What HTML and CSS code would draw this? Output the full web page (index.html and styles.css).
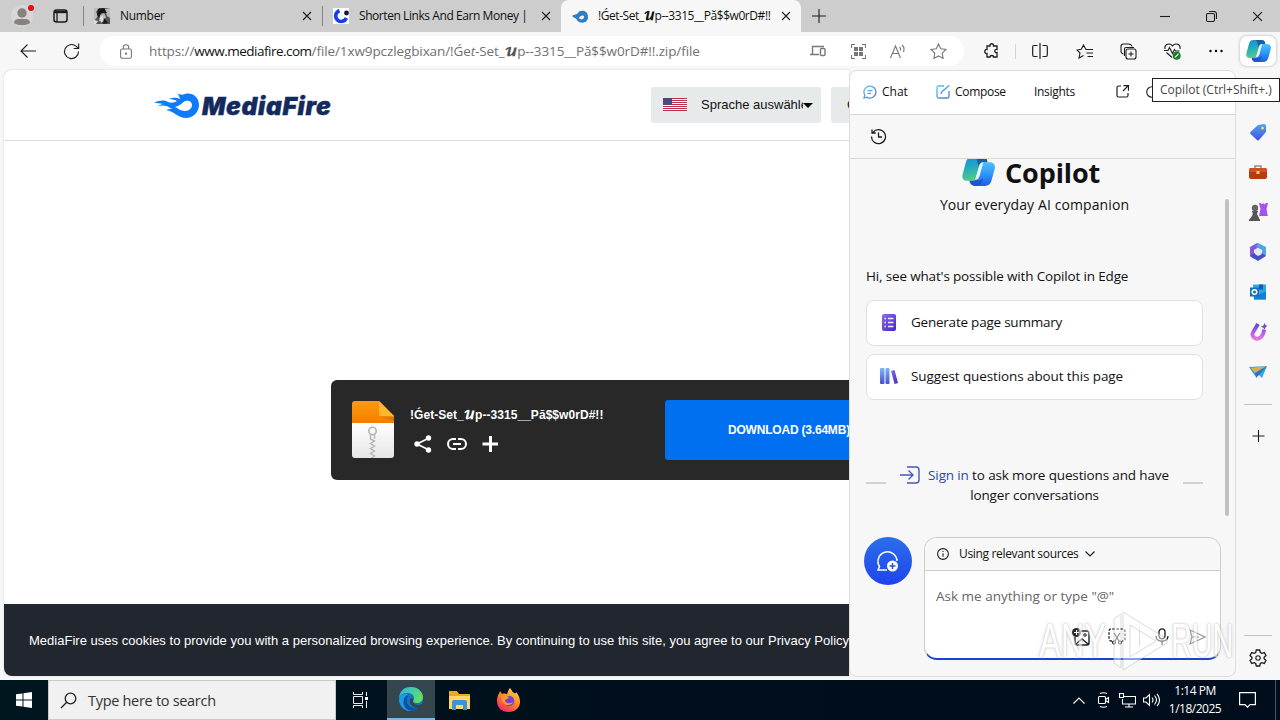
FILE: index.html
```html
<!DOCTYPE html>
<html lang="en">
<head>
<meta charset="utf-8">
<title>MediaFire - Edge</title>
<link rel="stylesheet" href="styles.css">
</head>
<body>
<svg width="0" height="0" class="defs">
  <defs>
    <linearGradient id="cpA" x1="0" y1="0" x2="0.2" y2="1"><stop offset="0" stop-color="#1c88d8"/><stop offset=".45" stop-color="#1fa9c0"/><stop offset="1" stop-color="#52c98a"/></linearGradient>
    <linearGradient id="cpB" x1="0" y1="0" x2="0" y2="1"><stop offset="0" stop-color="#4cc0ff"/><stop offset=".5" stop-color="#2e96fa"/><stop offset="1" stop-color="#1b5fe0"/></linearGradient>
    <linearGradient id="violet" x1="0" y1="0" x2="1" y2="1"><stop offset="0" stop-color="#8a6cf5"/><stop offset="1" stop-color="#4425c4"/></linearGradient>
    <linearGradient id="books" x1="0" y1="0" x2="0" y2="1"><stop offset="0" stop-color="#7ab8f8"/><stop offset="1" stop-color="#4a50d0"/></linearGradient>
    <linearGradient id="sky" x1="0" y1="0" x2="1" y2="1"><stop offset="0" stop-color="#55c6f0"/><stop offset="1" stop-color="#4778e0"/></linearGradient>
    <linearGradient id="tag" x1="0" y1="0" x2="0" y2="1"><stop offset="0" stop-color="#4aa6f0"/><stop offset="1" stop-color="#4a50e0"/></linearGradient>
    <linearGradient id="edgeG" x1="0" y1="0" x2="1" y2=".6"><stop offset="0" stop-color="#2fb4ea"/><stop offset="1" stop-color="#63dd62"/></linearGradient>
    <linearGradient id="pink" x1="0" y1="0" x2="0" y2="1"><stop offset="0" stop-color="#6246d6"/><stop offset="1" stop-color="#e873e6"/></linearGradient>
    <linearGradient id="fox" x1=".8" y1="0" x2=".2" y2="1"><stop offset="0" stop-color="#ffe043"/><stop offset=".45" stop-color="#ff8a24"/><stop offset="1" stop-color="#f5206e"/></linearGradient>
    <linearGradient id="paper" x1="0" y1="0" x2="0" y2="1"><stop offset="0" stop-color="#fff"/><stop offset="1" stop-color="#e6e6e6"/></linearGradient>
    <linearGradient id="orange" x1="0" y1="0" x2="0" y2="1"><stop offset="0" stop-color="#ff9a0c"/><stop offset="1" stop-color="#f08000"/></linearGradient>
    <symbol id="x" viewBox="0 0 10 10"><path d="M1 1l8 8M9 1L1 9"/></symbol>
    <symbol id="copilot" viewBox="0 0 32 30">
      <path fill="url(#cpB)" d="M18 6h8.500c4 0 6 2.500 5.300 6l-3 11c-1 4-3 6-7 6H11z"/>
      <path fill="#2054d0" d="M7 23.500h9c2 0 3.500-.5 4.500-3-1 6-3 8.500-7.500 8.500-4 0-5-2-6-5.500z"/>
      <path fill="url(#cpA)" d="M10 1h11l-5.500 17.500c-1 3.500-2 5.500-5 5.500h-6C1 24-.2 21.500.6 18L3.500 7C4.600 2.800 6 1 10 1z"/>
      <path fill="#175f9e" d="M12 1h8.500c3 0 3.700 1.500 4.300 5H21c-3 0-4 1.600-5 4l-.8-3C14.600 4 14 2 12 1z"/>
      <path fill="#e9f8ff" d="M16.500 10c.7-2.600 1.700-4 4.300-4l-3.700 13c-.8 2.500-1.800 4-4.400 4z"/>
    </symbol>
    <symbol id="flame" viewBox="0 0 46 26">
      <path fill-rule="evenodd" d="M0 11c6-3 10-3 14-1 3 1 6 1 9-1-2-1-4-2-8-2 4-2 8-1 11 0-1-3-1-4-3-6 3 2 5 2 8 1 7-2 14 3 14 11 0 7-6 13-13 13-8 0-12-7-20-8 2-1 4-1 6-1-5-4-9-4-14-3 2-1 3-2 5-2-3-1-6-1-9-1zM21 15c3 1 5 4 10 4 4 0 7-3 7-6 0-4-4-5-7-4-3 2-6 5-10 6z"/>
    </symbol>
  </defs>
</svg>

<div class="tabs">
  <div class="avatar"><svg width="22" height="22" viewBox="0 0 22 22"><circle cx="11" cy="11" r="11" fill="#d9d7d5"/><circle cx="11" cy="8" r="4.700" fill="#86827f"/><path fill="#86827f" d="M3 18c0-3 2-4 4-4h8c2 0 4 1 4 4-4 3-12 3-16 0z"/></svg><i class="red-dot"></i></div>
  <svg class="workspace line" width="15" height="14" viewBox="0 0 15 14"><rect x="1" y="1" width="13" height="12" rx="2.500" stroke-width="1.500"/><path d="M1 3h13" stroke-width="2.400"/><path d="M4 3v10" stroke-width="1.300"/></svg>
  <div class="tab first">
    <svg width="16" height="16"><path fill="#555" d="M0 0h16v16H0z"/><path fill="#bbb" d="M0 0h5l-3 4 2 4-4 5zM11 1l5-1v10l-3-2zM6 7l4-2 2 4-3 5-4-1z"/><path fill="#181818" d="M4 1l6-1 3 5-6 0-2 5-2-3zM10 10l4 5-5 1z"/><path fill="#ddd" d="M6 9l3-1 0 4-2 3zM0 12l4 1-2 3H0z"/></svg>
    <span class="title t-number">Number</span><svg class="line close" width="10" height="10"><use href="#x"/></svg>
  </div>
  <div class="tab second">
    <svg width="16" height="16"><path fill="#fff" d="M0 0h16v16H0z"/><path fill="none" stroke="#173cf3" stroke-width="3.600" d="M6.500 2.700A5.500 5.500 0 1 0 13.300 10"/><circle cx="13.500" cy="5" r="2.400" fill="#15153d"/></svg>
    <span class="title t-short">Shorten Links And Earn Money |</span><svg class="line close" width="10" height="10"><use href="#x"/></svg>
  </div>
  <div class="tab active">
    <svg width="16" height="13" viewBox="0 0 16 13"><path fill="#2f7dc3" fill-rule="evenodd" d="M0 6c2-2 5-1 6-3C7 0 16-1 16 7c0 7-9 7-11 3C4 8 2 8 0 6zM7 8c1 2 5 2 5-1 0-2-3-2-5 1z"/></svg>
    <span class="title t-active">!Ǵet-Set_<b class="scr">𝓤</b>p--3315__Pă$$w0rD#!!</span><svg class="line close" width="10" height="10"><use href="#x"/></svg>
  </div>
  <svg class="line plus-tab" width="14" height="14" viewBox="0 0 14 14"><path d="M7 0v14M0 7h14"/></svg>
  <div class="win">
    <span><svg class="line" width="10" height="10"><path d="M0 5.500h10"/></svg></span>
    <span><svg class="line" width="11" height="11" viewBox="0 0 11 11"><rect x=".5" y="2.500" width="8" height="8" rx="1.500"/><path d="M3 .5h5q2.500 0 2.500 2.500v5"/></svg></span>
    <span><svg class="line" width="11" height="11" viewBox="0 0 10 10"><use href="#x"/></svg></span>
  </div>
</div>

<div class="toolbar">
  <svg class="line back" width="16" height="14" viewBox="0 0 16 14"><path d="M16 7H1M7.500 .5L1 7l6.500 6.500"/></svg>
  <svg class="line reload" width="17" height="17" viewBox="0 0 17 17"><path d="M15.500 8.500A7 7 0 1 1 13 3.200l2.500 2.300M15.700 .5v5h-5"/></svg>
  <div class="address">
    <svg class="line grey lock" width="12" height="15" viewBox="0 0 12 15"><rect x=".6" y="5" width="10.800" height="9.300" rx="1.500"/><path d="M3.300 5V3.500a2.700 2.700 0 0 1 5.400 0V5"/><circle cx="6" cy="9.700" r=".6"/></svg>
    <span class="url">https://<b class="host">www.mediafire.com</b>/file/1xw9pczlegbixan/!Ǵe<i>t</i>-Set_<b class="scr">𝓤</b>p--3315__Pă$$w0rD#!!.zip/file</span>
    <div class="addr-icons">
      <svg class="line grey" width="16" height="12" viewBox="0 0 16 12"><path stroke-width="1.400" d="M2.500 9V1.500H14M0 9.500h9"/><rect x="10.500" y="3.500" width="4.500" height="7" rx="1" stroke-width="1.400"/></svg>
      <svg class="line grey" width="15" height="15" viewBox="0 0 15 15"><path d="M.5 4V.5H4M11 .5h3.500V4M.5 11v3.500H4M14.500 11v3.500H11"/><path fill="#777" stroke="none" d="M3 3h4v4H3zM8 3h4v4H8zM3 8h4v4H3zM8 8h4v4H8z"/></svg>
      <svg class="line grey" width="16" height="15" viewBox="0 0 16 15"><path d="M.5 14L5.500 2l5 12M2.500 9.500h6M9.500 3q1.500 1.300 1 3.500M12 1q3 2.500 1.500 7"/></svg>
      <svg class="line grey" width="17" height="16" viewBox="0 0 17 16"><path d="M8.500 1l2.300 4.800 5.200.7-3.800 3.700.9 5.200-4.600-2.500-4.600 2.500.9-5.200L1 6.500l5.200-.7z"/></svg>
    </div>
  </div>
  <div class="tools">
    <svg class="line" width="15" height="16" viewBox="0 0 15 16"><path stroke-width="1.300" d="M3 3h3c-.5-3 4-3 3.500 0H13v3.500c-3-.5-3 3.500 0 3V14H9.500c.5-2-3.500-2-3.500 0H3v-3.500C0 11 0 6 3 6.500z"/></svg>
    <i class="sep"></i>
    <svg class="line" width="16" height="16" viewBox="0 0 16 16"><path stroke-width="1.200" d="M5.500 2.500H2q-1.300 0-1.300 1.300v8.500q0 1.200 1.300 1.200h3.500M10.500 2.500H14q1.300 0 1.300 1.300v8.500q0 1.200-1.300 1.200h-3.500M8 0v16"/></svg>
    <svg class="line" width="17" height="15" viewBox="0 0 17 15"><path d="M10 5.500L7.500 1 5.300 5.200 1 6l3 3-1 5 4.500-2.500M9.500 5.500H17M10.500 9H17M11.500 12.500H17"/></svg>
    <svg class="line" width="17" height="17" viewBox="0 0 17 17"><path d="M3.500 11Q1 10.500 1 8V3.500Q1 1 3.500 1h5q3 0 3.500 2.500M4.500 13V6q0-1.500 1.500-1.500h8"/><rect x="6" y="6" width="10" height="10" rx="2" fill="#f7f7f7"/><path d="M11 8.500v5M8.500 11h5"/></svg>
    <svg class="line" width="17" height="17" viewBox="0 0 17 17"><path d="M1 6C0 1 6-.5 8.500 3 11-.5 17 1 16 6M2.500 9.500L8 14.500M0 7.500h4l1.500-3 3 6 2-4 1 1.500h4"/><circle cx="12.700" cy="12.700" r="4" fill="#13812a" stroke="none"/><path stroke="#fff" d="M11 14.300l3.500-3.500"/></svg>
    <svg width="14" height="4" viewBox="0 0 14 4"><circle cx="1.500" cy="2" r="1.200"/><circle cx="7" cy="2" r="1.200"/><circle cx="12.500" cy="2" r="1.200"/></svg>
    <div class="cp-btn"><svg width="25" height="24"><use href="#copilot"/></svg></div>
  </div>
</div>

<div class="main">
  <div class="page">
    <div class="mf-head">
      <svg class="mf-flame" width="46" height="26"><use href="#flame"/></svg><span class="mf-word">MediaFire</span>
      <div class="lang">
        <svg width="24" height="14"><path fill="#fff" d="M0 0h24v13H0z"/><path fill="#b8304a" d="M0 0h24v1H0zM0 2h24v1H0zM0 4h24v1H0zM0 6h24v1H0zM0 8h24v1H0zM0 10h24v1H0zM0 12h24v1H0z"/><path fill="#4c4a78" d="M0 0h9v7H0z"/></svg>
        <span class="lang-text">Sprache auswähle</span><i class="caret"></i>
      </div>
      <div class="next-btn"><span>C</span></div>
    </div>
    <div class="body">
      <div class="dl">
        <svg class="zip" width="42" height="57" viewBox="0 0 42 57"><path fill="url(#paper)" d="M0 21h42v33q0 3-3 3H3q-3 0-3-3z"/><path fill="url(#orange)" d="M3 0h24l15 15v7H0V3q0-3 3-3z"/><path fill="#ffb52e" d="M27 0l15 15H29q-2 0-2-2z"/><path fill="#d07000" d="M29 16h13v4z" opacity=".6"/><circle cx="20.500" cy="30" r="3.700" fill="none" stroke="#b5b5b5" stroke-width="1.600"/><path fill="none" stroke="#b5b5b5" stroke-width="1.400" d="M18.500 33v5l4 2-4 2.500 4 2.500-4 2.500 4 2.500-4 2.500 4 2.500-3 2M22.500 33v5"/></svg>
        <div class="info">
          <div class="fname">!Ǵet-Set_<span class="scr">𝓤</span>p--3315__Pă$$w0rD#!!</div>
          <div class="acts">
            <svg width="18" height="18" viewBox="0 0 18 18" fill="#fff"><path fill="none" stroke="#fff" stroke-width="1.800" d="M15 3L3 9l12 6"/><circle cx="14.500" cy="3" r="2.700"/><circle cx="3" cy="9" r="2.700"/><circle cx="14.500" cy="15" r="2.700"/></svg>
            <svg width="20" height="12" viewBox="0 0 20 12" fill="none" stroke="#fff" stroke-width="2"><path d="M9 1H6a5 5 0 0 0 0 10h3M11 1h3a5 5 0 0 1 0 10h-3M6 6h8"/></svg>
            <svg width="16" height="16" viewBox="0 0 16 16"><path stroke="#fff" stroke-width="3" d="M8.500 0v16M.5 8h16"/></svg>
          </div>
        </div>
        <div class="dl-btn"><span>DOWNLOAD (3.64MB)</span></div>
      </div>
    </div>
    <div class="cookie"><span>MediaFire uses cookies to provide you with a personalized browsing experience. By continuing to use this site, you agree to our Privacy Policy</span></div>
  </div>

  <div class="panel">
    <div class="p-head">
      <svg width="14" height="14" viewBox="0 0 14 14" fill="none" stroke="url(#sky)" stroke-width="1.300"><path d="M1 13l.7-3A6 6 0 1 1 4 12.300zM4.500 5.700h5M4.500 8.300h3.500"/></svg>
      <span class="h-chat">Chat</span>
      <svg class="i-comp" width="14" height="14" viewBox="0 0 14 14" fill="none" stroke="url(#sky)" stroke-width="1.300"><path d="M8 1H2.500Q1 1 1 2.500v9Q1 13 2.500 13h9q1.500 0 1.500-1.500V6M5 9.200l.5-2L13.300 .3"/></svg>
      <span class="h-comp">Compose</span>
      <span class="h-ins">Insights</span>
      <svg class="line i-open" width="13" height="13" viewBox="0 0 13 13"><path stroke-width="1.200" d="M5 1H2.500Q1 1 1 2.500v8Q1 12 2.500 12h8q1.500 0 1.500-1.500V8M7.500 .7h5v5M12.300 .7L7 6"/></svg>
      <svg class="line i-ref" width="12" height="12" viewBox="0 0 12 12"><circle cx="6" cy="6" r="5.300"/></svg>
    </div>
    <div class="p-sub"><svg class="line" width="17" height="17" viewBox="0 0 17 17"><path stroke-width="1.300" d="M3 4.300A7 7 0 1 1 1.500 8.500M2 1.500V5h3.700M8.500 4.500v4.500H12"/></svg></div>
    <div class="p-body">
      <div class="brand"><svg width="33" height="31"><use href="#copilot"/></svg><b>Copilot</b></div>
      <div class="tagline"><span>Your everyday AI companion</span></div>
      <div class="hi"><span>Hi, see what's possible with Copilot in Edge</span></div>
      <div class="card"><svg width="18" height="18" viewBox="0 0 18 18"><rect x="2" y="0" width="14" height="17" rx="2" fill="url(#violet)"/><path stroke="#f3e9ff" stroke-width="1.300" d="M4.500 4.500H6M8 4.500h5.500M4.500 8.500H6M8 8.500h5.500M4.500 12.500H6M8 12.500h5.500"/></svg><span class="c1">Generate page summary</span></div>
      <div class="card"><svg width="18" height="17" viewBox="0 0 18 17"><rect width="4.500" height="16" rx="1" fill="url(#books)"/><rect x="5.500" width="4" height="16" rx="1" fill="url(#books)"/><path fill="url(#violet)" d="M11 3l3.500-1L18 15l-3.500 1z"/></svg><span class="c2">Suggest questions about this page</span></div>
      <div class="sign">
        <i class="dash"></i>
        <p><svg width="20" height="18" viewBox="0 0 20 18" fill="none" stroke="#4658bd" stroke-width="1.400"><path d="M7 1h9q3 0 3 3v10q0 3-3 3H7M0 9h13M8.500 4.500L13 9l-4.500 4.500"/></svg><a>Sign in</a> to ask more questions and have<br><span class="longer">longer conversations</span></p>
        <i class="dash"></i>
      </div>
      <div class="chat">
        <div class="new"><svg width="24" height="24" viewBox="0 0 24 24" fill="none" stroke="#fff" stroke-width="1.500"><path d="M11 21H2l1.500-3.500A9.500 9.500 0 1 1 21 12"/><circle cx="16.500" cy="17" r="5.500" fill="#fff" stroke="none"/><path stroke="#3554c8" d="M16.500 14v6M13.500 17h6"/></svg></div>
        <div class="box">
          <div class="src"><svg class="line" width="12" height="12" viewBox="0 0 12 12"><circle cx="6" cy="6" r="5.400"/><path d="M6 5.200v3.500M6 3v1"/></svg><span>Using relevant sources</span><svg class="line" width="10" height="6" viewBox="0 0 10 6"><path d="M.5 .5L5 5 9.500 .5"/></svg></div>
          <div class="ask"><span>Ask me anything or type "@"</span></div>
          <div class="box-icons">
            <svg class="line" width="18" height="18" viewBox="0 0 18 18"><path stroke-width="1.400" d="M9 3h6q2 0 2 2v10q0 2-2 2H5q-2 0-2-2V9M4 16l6-5 6 5"/><circle cx="13" cy="7" r="1.200"/><circle cx="4.500" cy="4.500" r="4.500" fill="#222" stroke="none"/><path stroke="#fff" d="M4.500 2v5M2 4.500h5"/></svg>
            <svg class="line" width="18" height="17" viewBox="0 0 18 17"><path stroke-width="1.300" stroke-dasharray="2.500 1.500" d="M4 13H3q-2 0-2-2V3q0-2 2-2h12q2 0 2 2v8q0 2-2 2h-1"/><path d="M6 5l5 8M12 5l-5 8"/><circle cx="6" cy="14.500" r="1.500"/><circle cx="12" cy="14.500" r="1.500"/></svg>
            <i class="bar"></i>
            <svg class="line" width="14" height="17" viewBox="0 0 14 17"><rect x="4" y=".8" width="6" height="10" rx="3" stroke-width="1.300"/><path stroke-width="1.300" d="M1 8c0 7 12 7 12 0M7 13.200V17"/></svg>
            <svg class="line send" width="17" height="16" viewBox="0 0 17 16"><path d="M1 1l15 7-15 7 2-7zM3 8h7"/></svg>
          </div>
        </div>
      </div>
      <i class="thumb"></i>
    </div>
  </div>

  <div class="side">
    <svg width="18" height="18" viewBox="0 0 18 18"><path fill="url(#tag)" d="M9 2l6-1q2 0 2 2v6l-7 8q-1 1-2 0L1.500 11q-1-1 0-2z"/><circle cx="13.500" cy="5" r="1.500" fill="#ffda5a"/></svg>
    <svg width="18" height="16" viewBox="0 0 18 16"><path fill="none" stroke="#8a8f94" stroke-width="1.500" d="M6 4V2h6v2"/><rect y="4" width="18" height="11" rx="2" fill="#b83a11"/><path fill="#d0501f" d="M2 4h14q2 0 2 3v1H0V7q0-3 2-3z"/><rect x="7.500" y="7" width="3" height="3" fill="#ffd06a"/></svg>
    <svg width="19" height="18" viewBox="0 0 19 18"><path fill="#a850ea" d="M10 0h2l.8 1.500L14 0l1.500 1.500L17 0h2l-1.500 6 1 6 .5 1H10l1.500-7z"/><circle cx="6" cy="5" r="3.200" fill="#666"/><path fill="#555" d="M3 8h6l-1 3 2 4 1 2v1H0v-1l3-4 .8-2z"/></svg>
    <svg width="18" height="18" viewBox="0 0 18 18"><path fill="#8557df" d="M8 0L1 4v9l4 3V7l7-4z"/><path fill="#4fa4e8" d="M9 0l8 4v9l-4-2V7L7 4z"/><path fill="#4451c4" d="M1 13l8 5 8-5-4-3-4 2-4-2z"/><path fill="#e6e4fb" d="M9 6l3.500 1.500v4L9 13l-3-2V7z"/></svg>
    <svg width="18" height="17" viewBox="0 0 18 17"><path fill="#28a8ea" d="M4 1h13v15H5z"/><path fill="#0f5fa8" d="M10 1h4v5h-4z"/><path fill="#1480cf" d="M5 13l12-5v8H5z"/><path fill="#1170bf" d="M1 4h9v9H1z"/><circle cx="5.500" cy="8.500" r="2.300" fill="none" stroke="#fff" stroke-width="1.500"/></svg>
    <svg width="19" height="19" viewBox="0 0 19 19"><path fill="none" stroke="url(#pink)" stroke-width="4" d="M9 1L4 9.500c-3 5 3 9 7.500 6C14 13.500 15 10 15.500 7"/><path fill="#7646cf" d="M16 0l1 2.500 2 .5-2 1.500-1 2.500-1.500-2L12 4l2.500-1z"/></svg>
    <svg width="18" height="14" viewBox="0 0 18 14"><path fill="#33a6e8" d="M0 2l18-1-5 12-4-4-3 2z"/><path fill="#dcae44" d="M2 3l16-2L6 8z"/><path fill="#2375ca" d="M18 1L6 8l1 5 3-3z"/></svg>
    <i class="rule"></i>
    <svg class="line" width="13" height="13" viewBox="0 0 13 13"><path d="M6.500 .5v12M.5 6.500h12"/></svg>
    <div class="settings"><i class="rule"></i>
    <svg class="line" width="18" height="18" viewBox="0 0 18 18"><path stroke-width="1.300" d="M7.300 1h3.400l.6 2.500 1.500.9 2.500-.8L17 6.500l-1.900 1.700v1.600l1.900 1.700-1.700 2.900-2.500-.8-1.500.9-.6 2.500H7.300l-.6-2.500-1.500-.9-2.500.8L1 11.500l1.900-1.700V8.200L1 6.500l1.700-2.900 2.500.8 1.500-.9z"/><circle cx="9" cy="9" r="2.200"/></svg></div>
  </div>
</div>

<div class="taskbar">
  <div class="start"><svg width="16" height="16" viewBox="0 0 16 16"><path fill="#fff" d="M0 2.300L6.500 1.400v6.100H0zM7.500 1.200L16 0v7.500H7.500zM0 8.500h6.500v6.100L0 13.700zM7.500 8.500H16V16l-8.500-1.200z"/></svg></div>
  <div class="search"><svg width="17" height="17" viewBox="0 0 17 17" fill="none" stroke="#222" stroke-width="1.300"><circle cx="10.500" cy="6.500" r="5.300"/><path d="M6.700 10.300L1 16"/></svg><span>Type here to search</span></div>
  <div class="app"><svg width="16" height="16" viewBox="0 0 16 16" fill="none" stroke="#eee"><path d="M.5 0v2.500h9V0M.5 16v-2.500h9V16M.5 4.500h9v7h-9zM13.500 0v4M13.500 9v7"/><path fill="#fff" stroke="none" d="M12 5h3v3h-3z"/></svg></div>
  <div class="app on"><svg width="24" height="24" viewBox="0 0 24 24"><circle cx="12" cy="12" r="12" fill="#0f76c6"/><path fill="url(#edgeG)" d="M0 11C1 3 6 0 12 0c7 0 12 5 12 10 0 4-3 6-6 6-3 0-4-1-4-2 1-1 1-2 1-3 0-3-3-5-7-5-4 0-7 2-8 5z"/><path fill="#1a9ce2" d="M0 12c1-4 5-6 9-5-3 2-4 5-3 9 1 4 4 7 7 8C6 25 0 19 0 12z"/><path fill="#124fa2" d="M9 9c-4 8 3 14 11 12-6 6-18 2-15-9 1-3 3-4 4-3z"/><path fill="#34474f" d="M14 14c0 2 2 4 5 4 2 0 3-1 4-1 1 0 0 2-2 4-6 1-11-3-10-8 1-2 4-2 3 1z"/></svg></div>
  <div class="app"><svg width="21" height="19" viewBox="0 0 21 19"><path fill="#e8a92b" d="M0 0h8l2 3h11v15H0z"/><path fill="#fdd767" d="M0 5h21v13H0z"/><path fill="#3e93d8" d="M3 11q0-2 2-2h11q2 0 2 2v8h-4v-5H7v5H3z"/></svg></div>
  <div class="app"><svg width="23" height="24" viewBox="0 0 23 24"><path fill="url(#fox)" d="M13 0c2 2 2 4 4 5 1 0 2 1 2-1 3 3 4 7 4 10 0 6-5 10-11.500 10S0 20 0 13C0 8 2 6 3 3l2 3c2-1 4 0 5 0 1-2 1-4 3-6z"/><circle cx="12" cy="13" r="5.300" fill="#7443d6"/><path fill="#ff9a22" d="M4 8c4-2 6 0 8 1-1 2-3 2-4 3 0 4 5 4 8 2-1 4-11 6-12-6z"/></svg></div>
  <div class="tray">
    <svg class="tl" width="12" height="7" viewBox="0 0 12 7"><path d="M.5 6.500L6 1l5.500 5.500"/></svg>
    <svg class="tl" width="13" height="16" viewBox="0 0 13 16"><rect x="1.500" y="4.500" width="7" height="7" rx="1"/><path d="M8.500 7.500l3-2v5l-3-2M3 1.500q3.500-1.500 7 0M3 14.500q3.500 1.500 7 0"/></svg>
    <svg class="tl" width="17" height="15" viewBox="0 0 17 15"><path d="M5 3.500h11.500v7.500H3.500V6M10 11v3M6 14h8"/><rect x=".5" y=".5" width="4" height="4"/></svg>
    <svg class="tl" width="17" height="14" viewBox="0 0 17 14"><path d="M.5 5v4h2.500l3.500 3.500v-11L3 5zM9 4.500q2 2.500 0 5M11.500 2.500q4 4.500 0 9M14 .8q5 6.200 0 12.400"/></svg>
    <div class="clock"><span>1:14 PM</span><span>1/18/2025</span></div>
    <svg class="tl" width="17" height="16" viewBox="0 0 17 16"><path stroke-width="1.200" d="M.6 .6h15.800v12H11l-2.500 2.600L6 12.600H.6z"/></svg>
    <i class="desk"></i>
  </div>
</div>

<div class="tooltip"><span>Copilot (Ctrl+Shift+.)</span></div>
<div class="mark"><span>ANY</span><svg width="58" height="64" viewBox="0 0 58 64"><path d="M4 10l7-5v54l-7-5zM13 3l44 27v4L13 61zM20 16v32l26-16z" fill-rule="evenodd"/></svg><span class="run">RUN</span></div>
</body>
</html>
```

FILE: styles.css
```css
* { box-sizing: border-box; }
body { margin: 0; width: 1280px; height: 720px; overflow: hidden; display: flex; flex-direction: column; background: #f7f7f7; color: #111; font: 13px/18px "Open Sans", "Noto Sans", sans-serif; }
.defs { position: absolute; }
svg { display: block; flex: none; }
span, a { white-space: nowrap; }
.line { fill: none; stroke: #1d1d1d; stroke-width: 1.1; }
.grey { stroke: #777; }
.scr { font-family: "DejaVu Math TeX Gyre", "DejaVu Serif", serif; font-weight: bold; font-size: .85em; line-height: 1; }

.tabs { height: 32px; flex: none; display: flex; align-items: center; background: #cdcdcd; font-size: 12px; }
.avatar { position: relative; margin-left: 11px; }
.red-dot { position: absolute; left: 17px; top: 0; width: 6px; height: 6px; border-radius: 50%; background: #e01010; }
.workspace { margin: 0 22px 0 20px; }
.tab { height: 32px; width: 239px; display: flex; align-items: center; background: linear-gradient(#858585, #858585) 0 50% / 1px 20px no-repeat; padding: 0 10px 0 11px; }
.first { margin-left: -7px; }
.title { margin-left: 10px; flex: 1; min-width: 0; }
.t-number { letter-spacing: -.3px; }
.t-short { letter-spacing: -.43px; }
.t-active { letter-spacing: -.43px; }
.tab .close { margin-left: 12px; }
.tab.active { background: #f7f7f7; border-radius: 8px 8px 0 0; width: 240px; }
.plus-tab { margin-left: 11px; }
.win { margin-left: auto; display: flex; }
.win span { width: 46px; display: flex; justify-content: center; }

.toolbar { height: 38px; flex: none; display: flex; align-items: center; }
.back { margin-left: 20px; }
.reload { margin-left: 27px; }
.address { margin-left: 20px; width: 864px; height: 30px; border-radius: 15px; background: #fff; display: flex; align-items: center; }
.lock { margin-left: 20px; }
.url { margin-left: 17px; font-size: 13.500px; color: #717171; letter-spacing: -.1px; }
.url .host { font-weight: 400; color: #111; letter-spacing: -.5px; }
.url .scr { color: #555; font-weight: bold; }
.addr-icons { margin-left: auto; margin-right: 6px; width: 160px; display: grid; grid-template-columns: repeat(4, 40px); justify-items: center; align-items: center; }
.tools { display: flex; align-items: center; flex: 1; }
.tools > svg:nth-of-type(1) { margin-left: 20px; }
.sep { width: 1px; height: 15px; background: #d2d2d2; margin: 0 16px; }
.tools > svg:nth-of-type(3) { margin-left: 28px; }
.tools > svg:nth-of-type(4), .tools > svg:nth-of-type(5) { margin-left: 27px; }
.tools > svg:nth-of-type(6) { margin-left: 28px; }
.cp-btn { margin-left: 17px; width: 36px; height: 30px; display: grid; place-items: center; border-radius: 7px; background: #fff; box-shadow: 0 0 3px #aaa; }

.main { height: 610px; flex: none; display: flex; }
.page { margin-left: 4px; width: 845px; height: 606px; flex: none; display: flex; flex-direction: column; background: #fff; border-radius: 8px 0 0 8px; overflow: hidden; box-shadow: 0 0 2px #ccc; font-family: "Liberation Sans", Arial, sans-serif; }
.mf-head { height: 71px; flex: none; display: flex; align-items: center; border-bottom: 1px solid #ddd; }
.mf-flame { margin-left: 150px; fill: #0e7bfc; }
.mf-word { margin: 1px 0 0 2px; width: 129px; flex: none; font: italic 900 24.500px/26px Inter, sans-serif; letter-spacing: .7px; color: #122a5e; -webkit-text-stroke: .4px #122a5e; }
.lang, .next-btn { height: 36px; border-radius: 3px; background: #e7eaeb; display: flex; align-items: center; flex: none; }
.lang { margin-left: 320px; width: 170px; padding: 0 7px 0 12px; }
.lang-text { margin-left: 14px; width: 102px; overflow: hidden; font-size: 13px; letter-spacing: 0; }
.caret { border: 5px solid transparent; border-top: 5px solid #000; border-bottom: 0; }
.next-btn { margin-left: 10px; width: 60px; padding-left: 16px; }
.body { flex: 1; padding: 239px 0 0 327px; }
.dl { height: 100px; width: 620px; display: flex; background: #282828; border-radius: 6px; padding: 20px 21px; }
.zip { margin-top: 1px; }
.info { margin-left: 16px; width: 256px; padding-top: 6px; }
.fname { color: #fff; font: bold 12px/18px "Liberation Sans", sans-serif; letter-spacing: .05px; white-space: nowrap; }
.acts { margin-top: 11px; padding-left: 4px; display: flex; align-items: center; gap: 15px; }
.dl-btn { width: 260px; height: 60px; flex: none; margin-left: -1px; background: #0070f0; border-radius: 3px; padding-left: 63px; display: flex; align-items: center; color: #fff; font-size: 12px; font-weight: bold; letter-spacing: -.2px; }
.cookie { height: 72px; flex: none; background: #22262e; color: #fff; display: flex; align-items: center; padding: 1px 0 0 25px; font-size: 13px; letter-spacing: .015px; }

.panel { width: 387px; height: 607px; flex: none; display: flex; flex-direction: column; border: 1px solid #ddd; border-radius: 8px; overflow: hidden; background: #f7f7f7; }
.p-head { height: 44px; flex: none; background: #fff; border-bottom: 1px solid #d8d8d8; display: flex; align-items: center; padding: 0 0 2px 13px; font-size: 12px; }
.h-chat { margin-left: 5px; width: 54px; }
.h-comp { margin-left: 5px; width: 79px; letter-spacing: -.3px; }
.h-ins { width: 82px; letter-spacing: -.3px; }
.i-ref { margin-left: 17px; }
.p-sub { height: 44px; flex: none; border-bottom: 1px solid #d8d8d8; display: flex; align-items: center; padding-left: 20px; }
.p-body { position: relative; flex: 1; overflow: hidden; padding: 0 14px 0 16px; font-size: 13.500px; }
.brand { height: 34px; display: flex; padding-left: 96px; margin-top: -4px; gap: 10px; font-size: 27px; line-height: 36px; letter-spacing: -.1px; }
.brand svg { margin-top: 1px; }
.tagline { margin-top: 6px; width: 337px; text-align: center; font-size: 14px; line-height: 20px; letter-spacing: .1px; }
.hi { margin-top: 51px; line-height: 20px; letter-spacing: -.16px; }
.card { width: 337px; height: 46px; border: 1px solid #e0e0e0; border-radius: 8px; background: #fff; display: flex; align-items: center; padding: 0 0 1px 13px; margin-top: 8px; }
.hi + .card { margin-top: 14px; }
.card span { margin: 0 0 1px 13px; }
.c1 { letter-spacing: -.23px; }
.c2 { letter-spacing: -.1px; }
.sign { width: 337px; margin-top: 65px; display: flex; justify-content: space-between; }
.sign p { margin: 0; line-height: 20px; text-align: center; white-space: nowrap; letter-spacing: -.14px; }
.sign p svg { display: inline-block; vertical-align: -4px; margin-right: 8px; }
.sign a { color: #2b48b5; }
.dash { width: 20px; height: 2px; margin-top: 17px; background: #d2d2d2; }
.chat { margin: 32px 0 0 -2px; display: flex; }
.new { width: 48px; height: 48px; border-radius: 50%; background: linear-gradient(#2a6fe8, #1f43f0); display: grid; place-items: center; }
.box { margin-left: 12px; width: 297px; height: 123px; flex: none; border: 1px solid #ccc; border-bottom: 2px solid #1b44c8; border-radius: 13px; background: #fff; overflow: hidden; }
.src { height: 33px; border-bottom: 1px solid #ccc; background: #f7f7f7; display: flex; align-items: center; padding-left: 12px; font-size: 12px; }
.src span { margin: 0 7px 0 10px; letter-spacing: -.33px; }
.ask { height: 50px; line-height: 51px; padding-left: 11px; color: #666; }
.box-icons { display: flex; align-items: center; padding: 6px 0 0 147px; }
.box-icons svg + svg { margin-left: 18px; }
.bar { width: 1px; height: 19px; margin: 0 15px 0 13px; background: #ddd; }
.box-icons .bar + svg { margin-left: 0; }
.box-icons .send { stroke: #999; margin-left: 20px; }
.thumb { position: absolute; right: 6px; top: 40px; width: 4px; height: 317px; border-radius: 2px; background: #c1c1c1; }

.side { flex: 1; display: flex; flex-direction: column; align-items: center; padding-top: 53px; }
.side > svg { height: 18px; margin-bottom: 22px; }
.rule { width: 28px; height: 1px; flex: none; background: #c2c2c2; }
.side > .rule { margin: 1px 0 22px; }
.settings { margin-top: 168px; display: flex; flex-direction: column; align-items: center; gap: 13px; }

.taskbar { height: 40px; flex: none; display: flex; background: linear-gradient(90deg, #00161f, #000f1b 50%, #000d1c); color: #fff; }
.start { width: 48px; display: grid; place-items: center; }
.search { width: 288px; border: 1px solid #c8c8c8; background: #f1f1f1; color: #333; display: flex; align-items: center; padding-left: 11px; font-size: 14.500px; }
.search span { margin: 1px 0 0 11px; letter-spacing: -.3px; }
.app { width: 49px; height: 40px; display: grid; place-items: center; }
.app.on { width: 48px; margin-left: 2px; background: #34474f; border-bottom: 2px solid #76b9ed; }
.tray { margin-left: auto; display: flex; align-items: center; }
.tl { fill: none; stroke: #fff; stroke-width: 1.1; margin-right: 11px; }
.tray .tl:nth-of-type(1) { margin-right: 12px; }
.tray .tl:nth-of-type(2) { margin-right: 9px; }
.tray .tl:nth-of-type(3) { margin-right: 7px; }
.tray .tl:nth-of-type(4) { margin-right: 8px; }
.clock { width: 54px; margin-right: 17px; display: flex; flex-direction: column; align-items: center; font-size: 12px; letter-spacing: -.5px; line-height: 18px; }
.tray .tl:nth-of-type(5) { margin-right: 19px; }
.desk { width: 5px; height: 40px; border-left: 1px solid #4a535b; }

.tooltip { position: absolute; left: 1152px; top: 78px; width: 128px; height: 24px; border: 1px solid #222; background: #fff; line-height: 22px; padding-left: 7px; font-size: 12px; color: #444; }
.mark { position: absolute; left: 1039px; top: 609px; display: flex; align-items: center; font: 48px/64px "Liberation Sans", sans-serif; opacity: .6; color: #fff; pointer-events: none; }
.mark span { width: 71px; text-shadow: 0 0 2px #999, 0 0 4px #bbb; transform: scaleX(.68); transform-origin: left; }
.mark .run { margin-left: 3px; width: 62px; transform: scaleX(.6); }
.mark svg { fill: #fffc; stroke: #c4c4c4; stroke-width: 1; }
```
